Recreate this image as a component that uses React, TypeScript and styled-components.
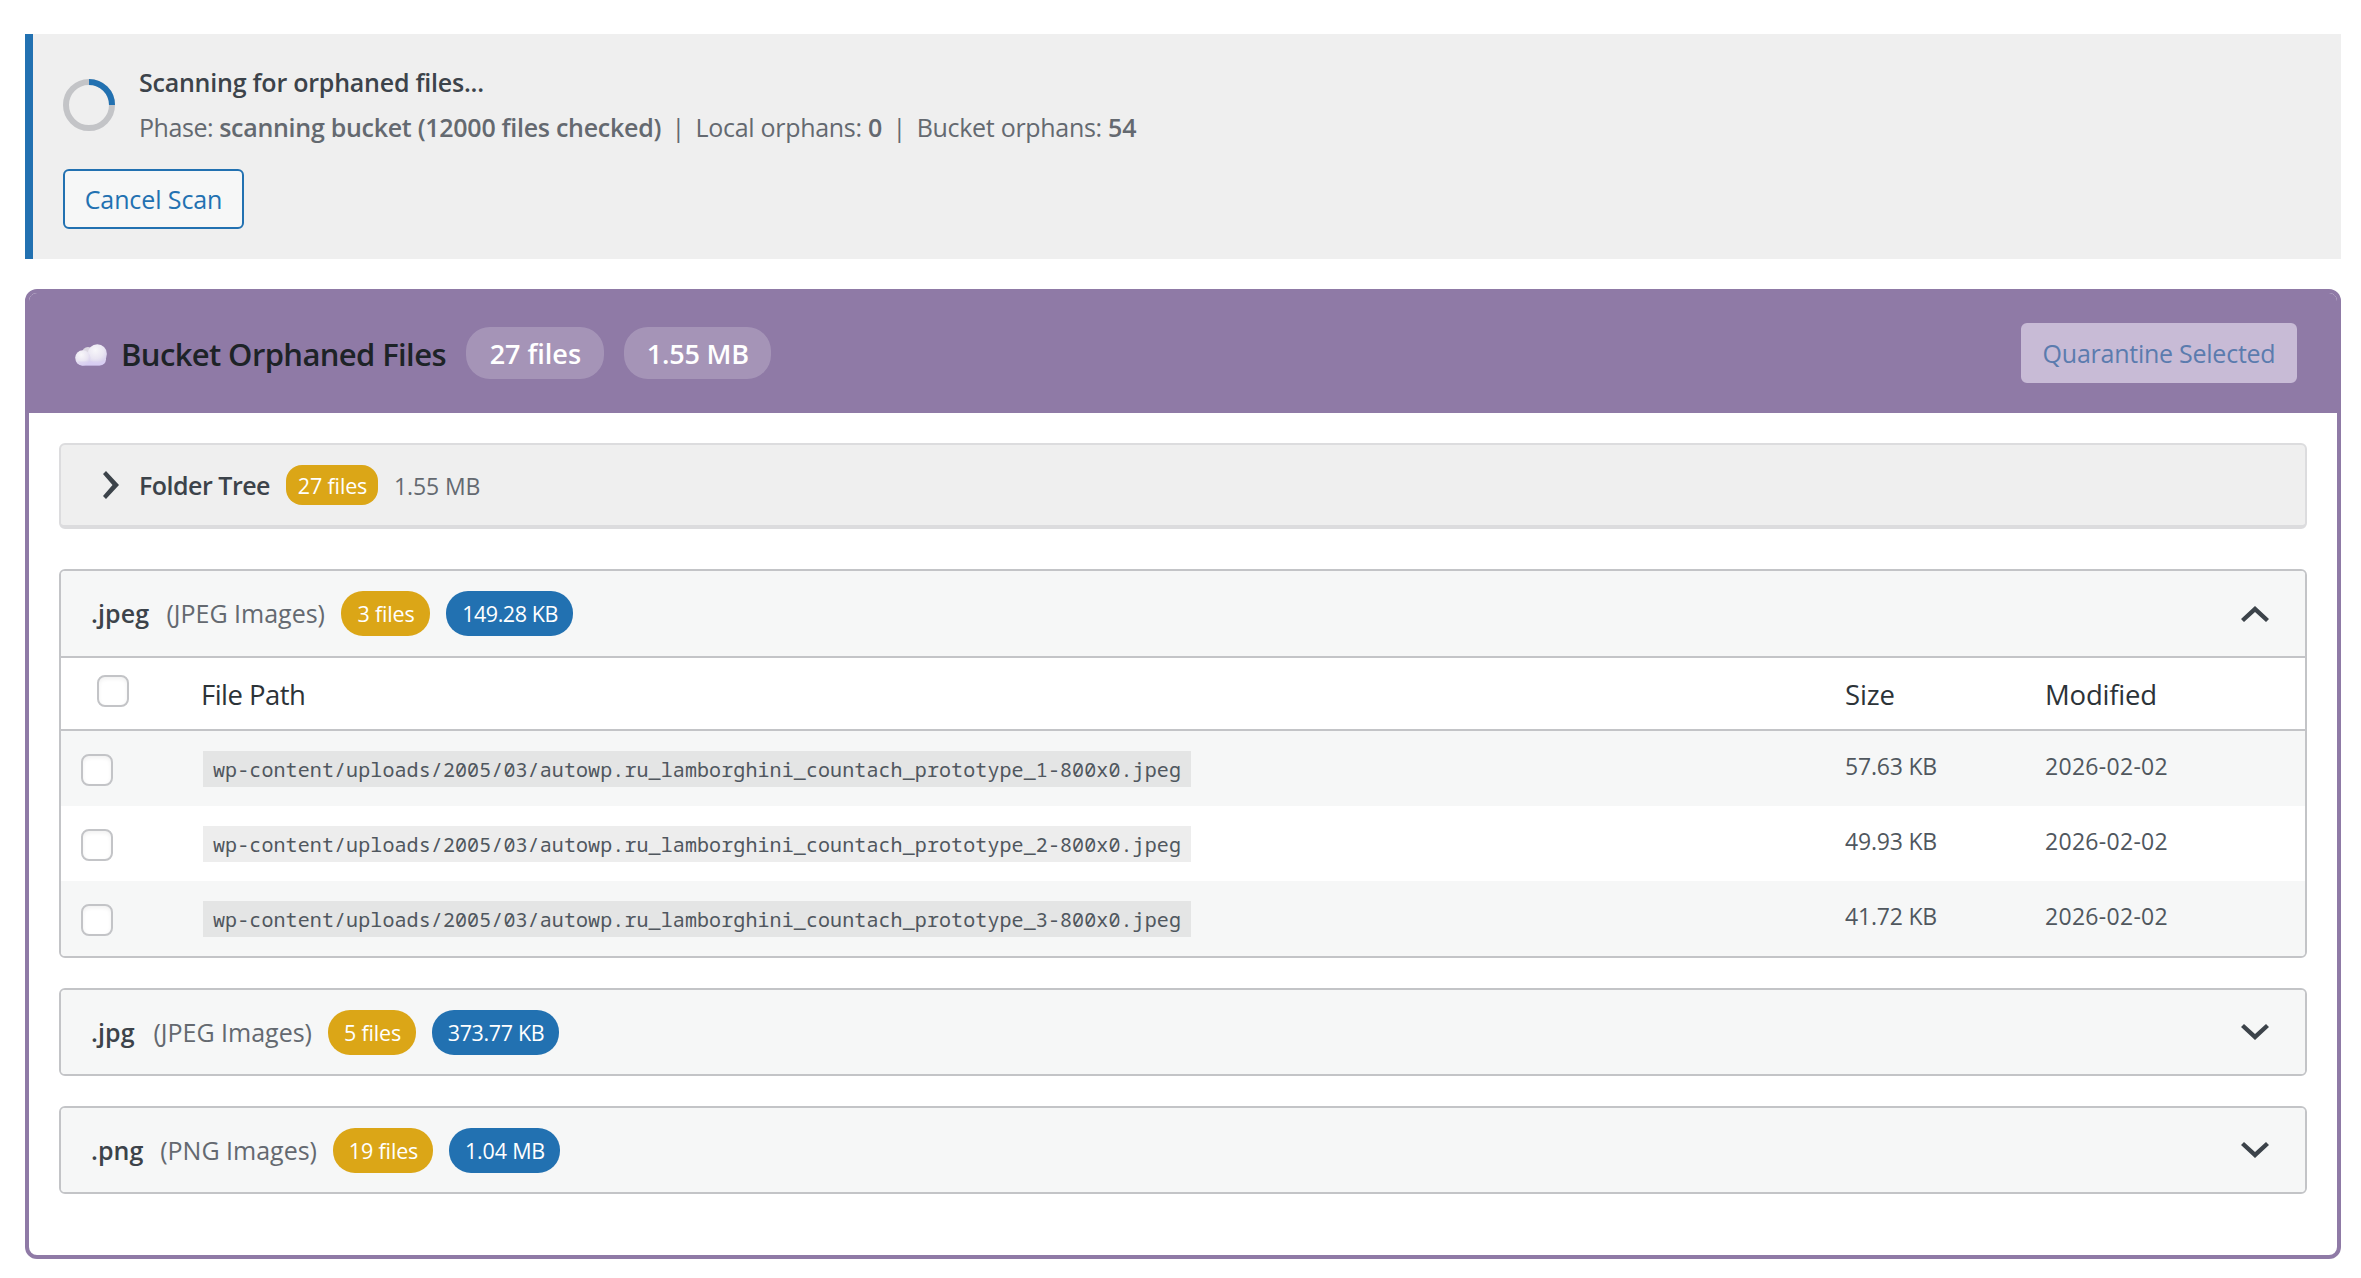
import React from "react";
import styled, { createGlobalStyle, css } from "styled-components";

const purple = "#8f7aa6";
const line = "#c3c4c7";

const GlobalStyle = createGlobalStyle`
  * { box-sizing: border-box; }
  body {
    margin: 0;
    background: #fff;
    color: #3c434a;
    font-family: "Open Sans", "Noto Sans", sans-serif;
    font-size: 25px;
  }
`;

const Page = styled.main`
  display: flex;
  flex-direction: column;
  gap: 30px;
  padding: 34px 20px 19px 25px;
`;

const Label = styled.span<{ $size?: number; $track?: number; $bold?: boolean; $color?: string }>`
  font-size: ${(p) => p.$size ?? 25}px;
  letter-spacing: ${(p) => p.$track ?? 0}px;
  font-weight: ${(p) => (p.$bold ? 600 : 400)};
  color: ${(p) => p.$color ?? "inherit"};
  white-space: pre;
`;

/* Progress notice */

const Notice = styled.section`
  height: 225px;
  padding: 26px 30px 30px;
  border-left: 8px solid #2271b1;
  background: #efefef;
`;

const NoticeRow = styled.div`
  display: flex;
  align-items: center;
  gap: 24px;
  margin-bottom: 19px;
`;

const Spinner = styled.svg`
  width: 52px;
  height: 52px;
  flex: none;
`;

const NoticeText = styled.div`
  display: grid;
  grid-template-rows: 45px 45px;
  line-height: 45px;
`;

const Phase = styled.div`
  color: #646970;
  white-space: pre;
`;

const Separator = styled.span`
  display: inline-block;
  width: 34.5px;
  text-align: center;
`;

const Button = styled.button<{ $muted?: boolean; $width: number }>`
  display: flex;
  align-items: center;
  justify-content: center;
  width: ${(p) => p.$width}px;
  height: 60px;
  padding: 0;
  border: 2px solid #2271b1;
  border-radius: 6px;
  background: #f6f7f7;
  color: #2271b1;
  font: inherit;
  ${(p) =>
    p.$muted &&
    css`
      margin-left: auto;
      border-color: #c8bbd6;
      background: #c8bbd6;
      color: #5b7bae;
    `}
`;

/* Bucket panel */

const Panel = styled.section`
  height: 970px;
  border: 4px solid ${purple};
  border-radius: 12px;
  background: #fff;
`;

const PanelHeader = styled.header`
  display: flex;
  align-items: center;
  gap: 20px;
  height: 120px;
  padding: 0 40px 0 46px;
  border-radius: 8px 8px 0 0;
  background: ${purple};
  color: #1d2327;
`;

const Title = styled.h2`
  display: flex;
  align-items: center;
  gap: 14px;
  margin: 0;
  padding-top: 1px;
  line-height: 44px;
`;

const Cloud = styled.svg`
  width: 32px;
  height: 22px;
  margin-top: 3px;
`;

const HeaderPill = styled.span<{ $width: number }>`
  display: flex;
  align-items: center;
  justify-content: center;
  width: ${(p) => p.$width}px;
  height: 52px;
  padding-left: 1px;
  border-radius: 24px;
  background: rgba(255, 255, 255, 0.2);
  color: #fff;
`;

const PanelBody = styled.div`
  display: flex;
  flex-direction: column;
  padding: 30px 30px 0;
`;

const Tree = styled.div`
  display: flex;
  align-items: center;
  height: 86px;
  margin-bottom: 40px;
  padding-left: 42px;
  border: 2px solid #dcdcde;
  border-bottom-width: 4px;
  border-radius: 6px;
  background: #efefef;
`;

const TreeLabel = styled.span`
  width: 147px;
  margin-left: 20px;
`;

const Badge = styled.span<{ $width: number; $tone: "gold" | "blue"; $small?: boolean }>`
  display: flex;
  align-items: center;
  justify-content: center;
  width: ${(p) => p.$width}px;
  height: ${(p) => (p.$small ? 40 : 45)}px;
  padding-left: 1px;
  border-radius: ${(p) => (p.$small ? 16 : 22)}px;
  background: ${(p) => (p.$tone === "gold" ? "#dba617" : "#2271b1")};
  color: #fff;
`;

const TreeSize = styled.span`
  margin-left: 16px;
`;

const Groups = styled.div`
  display: flex;
  flex-direction: column;
  gap: 30px;
`;

const Group = styled.article`
  border: 2px solid ${line};
  border-radius: 6px;
  overflow: hidden;
`;

const GroupHeader = styled.div<{ $open?: boolean }>`
  display: flex;
  align-items: center;
  gap: 16px;
  height: ${(p) => (p.$open ? 87 : 84)}px;
  padding: 0 36px 0 30px;
  border-bottom: ${(p) => (p.$open ? `2px solid ${line}` : "0")};
  background: #f6f7f7;
`;

const GroupName = styled.span<{ $width: number }>`
  display: flex;
  justify-content: space-between;
  width: ${(p) => p.$width}px;
  padding-bottom: 1px;
`;

const Chevron = styled.svg`
  width: 28px;
  height: 16px;
  margin-left: auto;
  fill: #3c434a;
`;

const TreeArrow = styled.svg`
  width: 16px;
  height: 28px;
  fill: #3c434a;
`;

const Row = styled.div`
  display: grid;
  grid-template-columns: 139px 1fr 200px 261px;
  align-items: center;
  height: 75px;
  color: #50575e;
  &:nth-child(odd) { background: #f6f7f7; }
`;

const HeadRow = styled(Row)`
  height: 73px;
  border-bottom: 2px solid ${line};
  color: #2c3338;
`;

const HeadCell = styled.div`
  padding: 2px 0 0 1px;
`;

const Cell = styled.div`
  padding: 0 0 7px 1px;
`;

const Check = styled.input.attrs({ type: "checkbox" })<{ $head?: boolean }>`
  appearance: none;
  display: block;
  width: 32px;
  height: 32px;
  margin: ${(p) => (p.$head ? "0 0 5px 36px" : "3px 0 0 20px")};
  border: 2px solid ${line};
  border-radius: 8px;
  background: #fff;
  box-shadow: inset 0 2px 4px rgba(0, 0, 0, 0.06);
`;

const Path = styled.code`
  display: flex;
  align-items: center;
  justify-self: start;
  height: 36px;
  margin: 1px 0 0 3px;
  padding: 0 10px;
  background: rgba(0, 0, 0, 0.07);
  font: 20px "Noto Sans Mono", "DejaVu Sans Mono", monospace;
  letter-spacing: 0.1px;
`;

const UP = "14,0 28,13 25,16 14,6 3,16 0,13";
const DOWN = "14,16 28,3 25,0 14,10 3,0 0,3";

type FileRow = { path: string; size: string; date: string };
type GroupData = {
  ext: string;
  kind: string;
  nameWidth: number;
  count: string;
  countWidth: number;
  size: string;
  sizeWidth: number;
  sizeTrack: number;
  files?: FileRow[];
};

const base = "wp-content/uploads/2005/03/autowp.ru_lamborghini_countach_prototype_";

const groups: GroupData[] = [
  {
    ext: ".jpeg", kind: "(JPEG Images)", nameWidth: 234,
    count: "3 files", countWidth: 89, size: "149.28 KB", sizeWidth: 127, sizeTrack: -0.45,
    files: [
      { path: base + "1-800x0.jpeg", size: "57.63 KB", date: "2026-02-02" },
      { path: base + "2-800x0.jpeg", size: "49.93 KB", date: "2026-02-02" },
      { path: base + "3-800x0.jpeg", size: "41.72 KB", date: "2026-02-02" },
    ],
  },
  {
    ext: ".jpg", kind: "(JPEG Images)", nameWidth: 221,
    count: "5 files", countWidth: 88, size: "373.77 KB", sizeWidth: 127, sizeTrack: -0.35,
  },
  {
    ext: ".png", kind: "(PNG Images)", nameWidth: 226,
    count: "19 files", countWidth: 100, size: "1.04 MB", sizeWidth: 111, sizeTrack: -0.2,
  },
];

const FileGroup = ({ g }: { g: GroupData }) => (
  <Group>
    <GroupHeader $open={!!g.files}>
      <GroupName $width={g.nameWidth}>
        <Label $bold $track={0.1}>{g.ext}</Label>
        <Label $color="#646970">{g.kind}</Label>
      </GroupName>
      <Badge $tone="gold" $width={g.countWidth}>
        <Label $size={21.5} $track={-0.15}>{g.count}</Label>
      </Badge>
      <Badge $tone="blue" $width={g.sizeWidth}>
        <Label $size={21.5} $track={g.sizeTrack}>{g.size}</Label>
      </Badge>
      <Chevron viewBox="0 0 28 16"><polygon points={g.files ? UP : DOWN} /></Chevron>
    </GroupHeader>
    {g.files && (
      <>
        <HeadRow>
          <Check $head />
          <HeadCell><Label $size={27.5} $track={-0.55}>File Path</Label></HeadCell>
          <HeadCell><Label $size={27.5} $track={-0.1}>Size</Label></HeadCell>
          <HeadCell><Label $size={27.5} $track={-0.2}>Modified</Label></HeadCell>
        </HeadRow>
        {g.files.map((f) => (
          <Row key={f.path}>
            <Check />
            <Path>{f.path}</Path>
            <Cell><Label $size={23} $track={-0.2}>{f.size}</Label></Cell>
            <Cell><Label $size={23} $track={0.3}>{f.date}</Label></Cell>
          </Row>
        ))}
      </>
    )}
  </Group>
);

export default function App() {
  return (
    <>
      <GlobalStyle />
      <Page>
        <Notice>
          <NoticeRow>
            <Spinner viewBox="0 0 52 52" fill="none" strokeWidth="6">
              <circle cx="26" cy="26" r="23" stroke="#c3c4c7" />
              <path d="M26 3a23 23 0 0 1 23 23" stroke="#2271b1" />
            </Spinner>
            <NoticeText>
              <Label $bold $track={-0.23}>Scanning for orphaned files...</Label>
              <Phase>
                <Label $track={-0.45}>Phase: </Label>
                <Label $bold $track={-0.28}>scanning bucket (12000 files checked)</Label>
                <Separator>|</Separator>
                <Label $track={-0.3}>Local orphans: </Label>
                <Label $bold>0</Label>
                <Separator>|</Separator>
                <Label $track={-0.3}>Bucket orphans: </Label>
                <Label $bold>54</Label>
              </Phase>
            </NoticeText>
          </NoticeRow>
          <Button $width={181}><Label $track={-0.1}>Cancel Scan</Label></Button>
        </Notice>

        <Panel>
          <PanelHeader>
            <Title>
              <Cloud viewBox="0 0 32 22">
                <defs>
                  <linearGradient id="base" x1="0" y1="0" x2="0" y2="1">
                    <stop offset="0" stopColor="#e9e6f0" />
                    <stop offset="1" stopColor="#d3c8f2" />
                  </linearGradient>
                  <radialGradient id="puff" cx="0.4" cy="0.3" r="0.75">
                    <stop offset="0" stopColor="#f8f7fa" />
                    <stop offset="0.6" stopColor="#e9e5f2" />
                    <stop offset="1" stopColor="#d5ccec" />
                  </radialGradient>
                </defs>
                <circle cx="13" cy="9" r="6" fill="#dcd8e2" />
                <rect x="1" y="9" width="30" height="12.5" rx="6.2" fill="url(#base)" />
                <circle cx="22.3" cy="9.9" r="9.6" fill="url(#puff)" />
                <circle cx="7.8" cy="13.8" r="7.6" fill="url(#puff)" />
                <path d="M7 21.5h17a8 8 0 0 0 6-4H3a7 7 0 0 0 4 4z" fill="#d8cef2" opacity="0.6" />
              </Cloud>
              <Label $bold $size={31} $track={-0.62}>Bucket Orphaned Files</Label>
            </Title>
            <HeaderPill $width={138}><Label $bold $size={27}>27 files</Label></HeaderPill>
            <HeaderPill $width={147}><Label $bold $size={27} $track={-0.2}>1.55 MB</Label></HeaderPill>
            <Button $muted $width={276} disabled>
              <Label $track={-0.25}>Quarantine Selected</Label>
            </Button>
          </PanelHeader>
          <PanelBody>
            <Tree>
              <TreeArrow viewBox="0 0 16 28">
                <polygon points="16,14 3,28 0,25 9.5,14 0,3 3,0" />
              </TreeArrow>
              <TreeLabel><Label $bold $track={-0.5}>Folder Tree</Label></TreeLabel>
              <Badge $small $tone="gold" $width={92}><Label $size={21.5} $track={-0.15}>27 files</Label></Badge>
              <TreeSize><Label $size={23} $track={-0.1} $color="#646970">1.55 MB</Label></TreeSize>
            </Tree>
            <Groups>
              {groups.map((g) => <FileGroup key={g.ext} g={g} />)}
            </Groups>
          </PanelBody>
        </Panel>
      </Page>
    </>
  );
}
